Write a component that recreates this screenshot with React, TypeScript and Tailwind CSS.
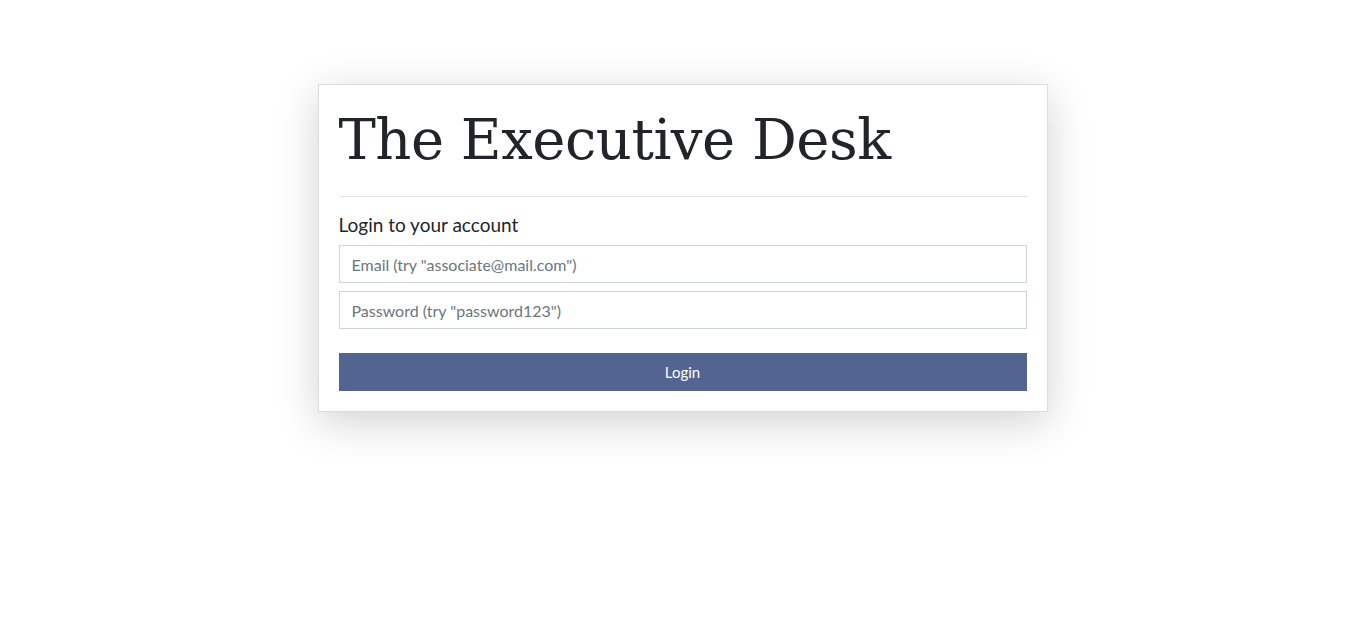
export default function App() {
  return (
    <div className="min-h-screen bg-white pt-[84px] font-['Lato','Noto_Sans',sans-serif]">
      <div className="mx-auto w-[730px] border border-[#dcdcdc] bg-white px-5 pt-5 pb-5 shadow-[0_10px_40px_rgba(0,0,0,0.18)]">
        <h1 className="font-['DejaVu_Serif',serif] text-[56px] leading-[69px] tracking-[-0.5px] text-[#212529]">
          The Executive Desk
        </h1>
        <hr className="mt-[22px] border-t border-[#e0e0e0]" />
        <h2 className="mt-[16px] text-[19px] leading-[24px] text-[#212529]">Login to your account</h2>
        <form className="mt-[8px] flex flex-col gap-2" onSubmit={(e) => e.preventDefault()}>
          <input
            type="email"
            placeholder={'Email (try "associate@mail.com")'}
            className="h-[38px] w-full border border-[#ced4da] bg-white px-3 text-[16px] text-[#495057] outline-none placeholder:text-[#6c757d]"
          />
          <input
            type="password"
            placeholder={'Password (try "password123")'}
            className="h-[38px] w-full border border-[#ced4da] bg-white px-3 text-[16px] text-[#495057] outline-none placeholder:text-[#6c757d]"
          />
          <button
            type="submit"
            className="mt-4 h-[38px] w-full bg-[#52648f] text-[15px] text-white"
          >
            Login
          </button>
        </form>
      </div>
    </div>
  )
}
